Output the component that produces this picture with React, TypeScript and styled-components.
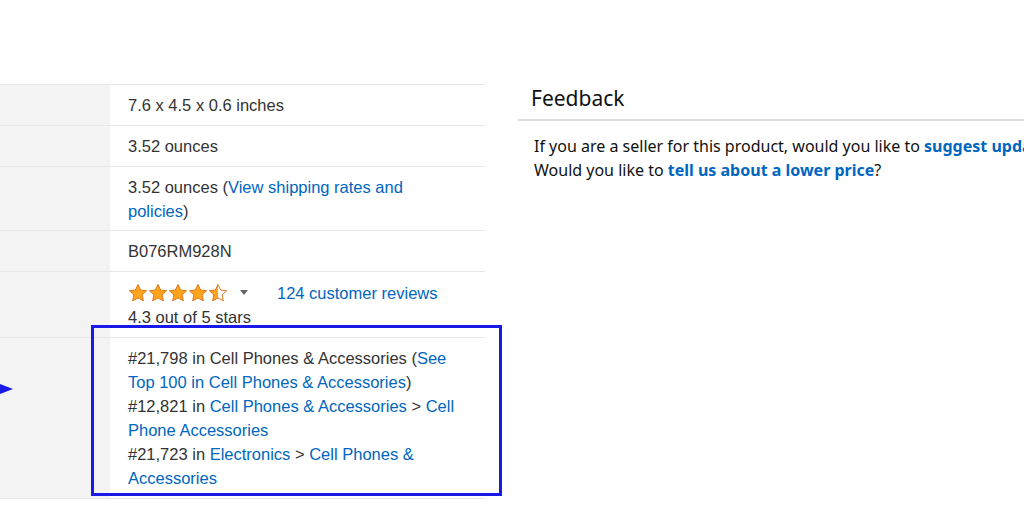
import React from 'react';
import styled, { createGlobalStyle } from 'styled-components';

const GlobalStyle = createGlobalStyle`
  html, body {
    margin: 0;
    padding: 0;
    background: #ffffff;
  }
  body {
    width: 1024px;
    height: 512px;
    overflow: hidden;
  }
`;

const Page = styled.div`
  position: relative;
  display: flex;
  align-items: flex-start;
  width: 1024px;
  height: 512px;
  padding-top: 84px;
  box-sizing: border-box;
  overflow: hidden;
`;

const Table = styled.div`
  width: 485px;
  flex-shrink: 0;
  border-top: 1px solid #e7e7e7;
  font-family: 'Liberation Sans', Arial, sans-serif;
  font-size: 16.5px;
  line-height: 24px;
  color: #333333;
`;

const Row = styled.div<{ $tight?: boolean }>`
  display: flex;
  border-bottom: 1px solid #e7e7e7;
  height: ${(p) => (p.$tight ? 'auto' : 'auto')};
`;

const Label = styled.div`
  width: 110px;
  flex-shrink: 0;
  background: #f3f3f3;
`;

const Value = styled.div<{ $bottom?: number }>`
  flex: 1;
  padding: 8px 22px ${(p) => p.$bottom ?? 8}px 18px;
`;

const Link = styled.a<{ $bold?: boolean }>`
  color: #0066c0;
  text-decoration: none;
  font-weight: ${(p) => (p.$bold ? 700 : 400)};
`;

const RatingLine = styled.div`
  display: flex;
  align-items: center;
  height: 25px;
`;

const Stars = styled.div`
  display: flex;
`;

const Caret = styled.span`
  width: 0;
  height: 0;
  margin: 0 29px 0 12px;
  border-left: 4px solid transparent;
  border-right: 4px solid transparent;
  border-top: 5px solid #666666;
`;

const Feedback = styled.div`
  flex: 1;
  margin-left: 33px;
  margin-top: -1px;
  font-family: 'Noto Sans', Arial, sans-serif;
  color: #0f1111;
  white-space: nowrap;
  overflow: hidden;
`;

const Heading = styled.h2`
  margin: 0;
  padding: 0 0 6px 13px;
  font-size: 21px;
  font-weight: 400;
  line-height: 30px;
  border-bottom: 2px solid #dddddd;
`;

const FeedbackText = styled.p`
  margin: 13px 0 0 16px;
  font-size: 16px;
  line-height: 24px;
`;

const Highlight = styled.div`
  position: absolute;
  left: 91px;
  top: 325px;
  width: 411px;
  height: 171px;
  box-sizing: border-box;
  border: 3px solid #1a1ae8;
  pointer-events: none;
`;

const Arrow = styled.svg`
  position: absolute;
  left: 0;
  top: 383px;
`;

const Star = ({ fill }: { fill: 'full' | 'half' }) => (
  <svg width="20" height="20" viewBox="0 0 24 24">
    <defs>
      <linearGradient id="half">
        <stop offset="50%" stopColor="#ffa41c" />
        <stop offset="50%" stopColor="#ffffff" />
      </linearGradient>
    </defs>
    <path
      d="M12 1.8l3.1 6.6 7.2.9-5.3 5 1.4 7.1L12 17.9l-6.4 3.5L7 14.3l-5.3-5 7.2-.9z"
      fill={fill === 'full' ? '#ffa41c' : 'url(#half)'}
      stroke="#de7921"
      strokeWidth="1.2"
      strokeLinejoin="round"
    />
  </svg>
);

export default function App() {
  return (
    <>
      <GlobalStyle />
      <Page>
        <Table>
          <Row>
            <Label />
            <Value>7.6 x 4.5 x 0.6 inches</Value>
          </Row>
          <Row>
            <Label />
            <Value>3.52 ounces</Value>
          </Row>
          <Row>
            <Label />
            <Value $bottom={7}>
              3.52 ounces (<Link>View shipping rates and policies</Link>)
            </Value>
          </Row>
          <Row>
            <Label />
            <Value>B076RM928N</Value>
          </Row>
          <Row>
            <Label />
            <Value>
              <RatingLine>
                <Stars>
                  <Star fill="full" />
                  <Star fill="full" />
                  <Star fill="full" />
                  <Star fill="full" />
                  <Star fill="half" />
                </Stars>
                <Caret />
                <Link>124 customer reviews</Link>
              </RatingLine>
              <div>4.3 out of 5 stars</div>
            </Value>
          </Row>
          <Row>
            <Label />
            <Value>
              <div>
                #21,798 in Cell Phones &amp; Accessories (
                <Link>See Top 100 in Cell Phones &amp; Accessories</Link>)
              </div>
              <div>
                #12,821 in <Link>Cell Phones &amp; Accessories</Link> &gt;{' '}
                <Link>Cell Phone Accessories</Link>
              </div>
              <div>
                #21,723 in <Link>Electronics</Link> &gt;{' '}
                <Link>Cell Phones &amp; Accessories</Link>
              </div>
            </Value>
          </Row>
        </Table>
        <Feedback>
          <Heading>Feedback</Heading>
          <FeedbackText>
            If you are a seller for this product, would you like to{' '}
            <Link $bold>suggest updates through seller support</Link>?
            <br />
            Would you like to <Link $bold>tell us about a lower price</Link>?
          </FeedbackText>
        </Feedback>
        <Highlight />
        <Arrow width="14" height="12" viewBox="0 0 14 12">
          <polygon points="0,1 13,6 0,11" fill="#1a1ae8" />
        </Arrow>
      </Page>
    </>
  );
}
